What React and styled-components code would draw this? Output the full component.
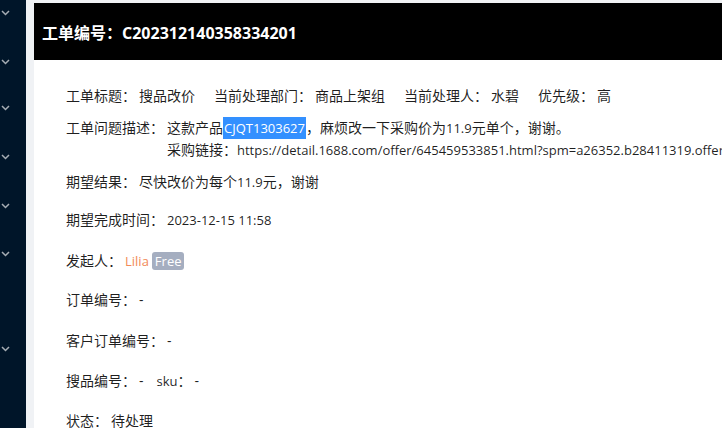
import React from "react";
import styled, { createGlobalStyle } from "styled-components";

const GlobalStyle = createGlobalStyle`
  body {
    margin: 0;
    font-family: "Open Sans", "Noto Sans CJK SC", sans-serif;
    font-size: 14px;
    color: rgba(0, 0, 0, 0.88);
  }
`;

const Layout = styled.div`
  display: flex;
  width: 722px;
  height: 428px;
  overflow: hidden;
`;

const Sidebar = styled.div`
  width: 26px;
  flex-shrink: 0;
  background-color: #001529;
  display: flex;
  flex-direction: column;
  padding-top: 9px;
  box-sizing: border-box;
`;

const Arrow = styled.div`
  height: 8px;
  margin-bottom: ${(props) => props.gap}px;
  padding-left: 1px;
  display: flex;
  align-items: center;
`;

const Main = styled.div`
  flex: 1;
  min-width: 0;
  background-color: #f0f2f5;
  padding: 3px 0 0 8px;
`;

const Card = styled.div`
  background-color: #ffffff;
  height: 100%;
`;

const Header = styled.div`
  background-color: #000000;
  height: 57px;
  display: flex;
  align-items: center;
  padding-left: 8px;
  color: #ffffff;
  font-size: 16px;
  font-weight: 700;
`;

const Content = styled.div`
  padding: 25px 0 0 32px;
  white-space: nowrap;
`;

const Row = styled.div`
  display: flex;
  line-height: 22px;
  margin-top: ${(props) => props.top || 0}px;
`;

const Item = styled.div`
  display: flex;
  margin-right: 19px;
`;

const Label = styled.span`
  flex-shrink: 0;
`;

const Value = styled.div`
  margin-left: 3px;
`;

const Latin = styled.span`
  font-size: 13px;
`;

const Selected = styled.span`
  display: inline-block;
  background-color: #3390ff;
  color: #ffffff;
  font-size: 13px;
  line-height: 22px;
  padding: 0 1px;
`;

const Name = styled.span`
  color: #f28a58;
  font-size: 13px;
`;

const Badge = styled.span`
  display: inline-block;
  margin-left: 3px;
  padding: 0 3px;
  height: 18px;
  line-height: 18px;
  border-radius: 3px;
  background-color: #a5aec0;
  color: #ffffff;
  font-size: 13px;
`;

const Sku = styled.span`
  margin-left: 13px;
  margin-right: 3px;
`;

function Chevron() {
  return (
    <svg width="9" height="6" viewBox="0 0 9 6">
      <path d="M1 1 L4.5 4.5 L8 1" fill="none" stroke="#a6adb4" strokeWidth="1.5" />
    </svg>
  );
}

const arrowGaps = [41, 38, 41, 41, 40, 87, 0];

export default function App() {
  return (
    <>
      <GlobalStyle />
      <Layout>
        <Sidebar>
          {arrowGaps.map((gap, i) => (
            <Arrow key={i} gap={gap}>
              <Chevron />
            </Arrow>
          ))}
        </Sidebar>
        <Main>
          <Card>
            <Header>工单编号：C202312140358334201</Header>
            <Content>
              <Row>
                <Item>
                  <Label>工单标题：</Label>
                  <Value>搜品改价</Value>
                </Item>
                <Item>
                  <Label>当前处理部门：</Label>
                  <Value>商品上架组</Value>
                </Item>
                <Item>
                  <Label>当前处理人：</Label>
                  <Value>水碧</Value>
                </Item>
                <Item>
                  <Label>优先级：</Label>
                  <Value>高</Value>
                </Item>
              </Row>
              <Row top={10}>
                <Label>工单问题描述：</Label>
                <Value>
                  <div>
                    这款产品<Selected>CJQT1303627</Selected>，麻烦改一下采购价为<Latin>11.9</Latin>元单个，谢谢。
                  </div>
                  <div>
                    采购链接：
                    <Latin>https://detail.1688.com/offer/645459533851.html?spm=a26352.b28411319.offer</Latin>
                  </div>
                </Value>
              </Row>
              <Row top={10}>
                <Label>期望结果：</Label>
                <Value>
                  尽快改价为每个<Latin>11.9</Latin>元，谢谢
                </Value>
              </Row>
              <Row top={16}>
                <Label>期望完成时间：</Label>
                <Value>
                  <Latin>2023-12-15 11:58</Latin>
                </Value>
              </Row>
              <Row top={19}>
                <Label>发起人：</Label>
                <Value>
                  <Name>Lilia</Name>
                  <Badge>Free</Badge>
                </Value>
              </Row>
              <Row top={17}>
                <Label>订单编号：</Label>
                <Value>-</Value>
              </Row>
              <Row top={19}>
                <Label>客户订单编号：</Label>
                <Value>-</Value>
              </Row>
              <Row top={18}>
                <Label>搜品编号：</Label>
                <Value>
                  -
                  <Sku>
                    <Latin>sku</Latin>：
                  </Sku>
                  -
                </Value>
              </Row>
              <Row top={18}>
                <Label>状态：</Label>
                <Value>待处理</Value>
              </Row>
            </Content>
          </Card>
        </Main>
      </Layout>
    </>
  );
}
